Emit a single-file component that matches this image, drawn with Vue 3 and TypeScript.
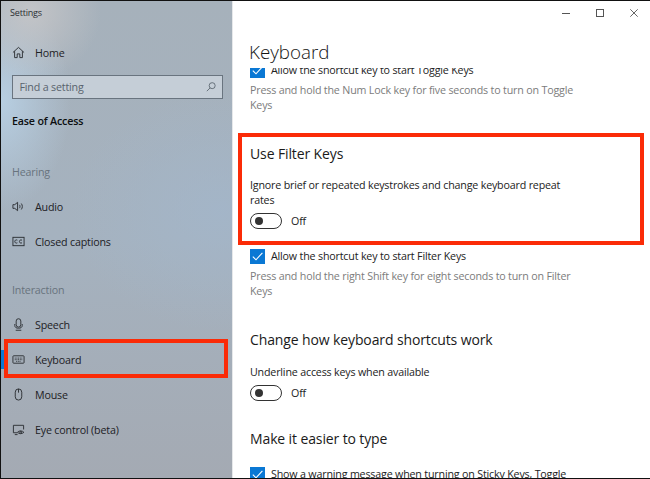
<script setup lang="ts">
interface NavItem { label: string; icon: string; active?: boolean }
const hearing: NavItem[] = [
  { label: 'Audio', icon: 'audio' },
  { label: 'Closed captions', icon: 'cc' },
]
const interaction: NavItem[] = [
  { label: 'Speech', icon: 'speech' },
  { label: 'Keyboard', icon: 'keyboard', active: true },
  { label: 'Mouse', icon: 'mouse' },
  { label: 'Eye control (beta)', icon: 'eye' },
]
const groups = [
  { title: 'Hearing', items: hearing },
  { title: 'Interaction', items: interaction },
]
</script>

<template>
  <div class="window">
    <aside class="sidebar">
      <div class="app-title">Settings</div>
      <div class="nav-row home">
        <svg class="icon" viewBox="0 0 14 14" fill="none" stroke="#2b2f33" stroke-width="1">
          <path d="M1 7 7 1.5 13 7M2.8 5.6V12.5H5.6V8.5H8.4V12.5H11.2V5.6" />
        </svg>
        <span>Home</span>
      </div>
      <div class="search">
        <span>Find a setting</span>
        <svg viewBox="0 0 12 12" width="10" height="10" fill="none" stroke="#55606a" stroke-width="1">
          <circle cx="7.4" cy="4.4" r="3.6" />
          <path d="M5 7 1 11" />
        </svg>
      </div>
      <div class="section-name">Ease of Access</div>
      <section v-for="g in groups" :key="g.title" class="group">
        <div class="group-title">{{ g.title }}</div>
        <div v-for="it in g.items" :key="it.label" class="nav-row" :class="{ active: it.active }">
          <svg class="icon" viewBox="0 0 14 14" fill="none" stroke="#2b2f33" stroke-width="1">
            <template v-if="it.icon === 'audio'">
              <path d="M1 5H3L6 2.5V11.5L3 9H1Z" />
              <path d="M8 5.2C8.8 6.2 8.8 7.8 8 8.8M10 3.8C11.5 5.6 11.5 8.4 10 10.2" />
            </template>
            <template v-else-if="it.icon === 'cc'">
              <rect x="1" y="2.5" width="12" height="9" />
              <path d="M5.8 5.6C4 4.6 3 6 3 7S4 9.4 5.8 8.4M10.8 5.6C9 4.6 8 6 8 7S9 9.4 10.8 8.4" />
            </template>
            <template v-else-if="it.icon === 'speech'">
              <rect x="4.5" y="0.8" width="5" height="9" rx="2.5" />
              <path d="M3 6.5V8C3 10.5 5 11 7 11S11 10.5 11 8V6.5M4 13.2H10" />
            </template>
            <template v-else-if="it.icon === 'keyboard'">
              <rect x="1" y="3" width="12" height="8" rx="0.8" />
              <path d="M3 5.5H11M3 7.2H11M4.5 9H9.5" stroke-dasharray="1 0.8" />
            </template>
            <template v-else-if="it.icon === 'mouse'">
              <rect x="3.5" y="1" width="7" height="12" rx="3.5" />
              <path d="M7 1V5" />
            </template>
            <template v-else>
              <path d="M6 10.5H1.5V2.5H12.5V7M3 12.5H6" />
              <path d="M6 10C7.5 8 11 8 12.8 10C11 12 7.5 12 6 10Z" />
              <circle cx="9.4" cy="10" r="1" />
            </template>
          </svg>
          <span>{{ it.label }}</span>
        </div>
      </section>
    </aside>

    <main class="main">
      <div class="controls">
        <svg viewBox="0 0 8 8" width="8" height="8" fill="none" stroke="#555" stroke-width="1"><path d="M0 4.5H8" /></svg>
        <svg viewBox="0 0 8 8" width="8" height="8" fill="none" stroke="#555" stroke-width="1"><rect x="0.5" y="0.5" width="7" height="7" /></svg>
        <svg viewBox="0 0 8 8" width="8" height="8" fill="none" stroke="#555" stroke-width="0.9"><path d="M0.3 0.3 7.7 7.7M7.7 0.3 0.3 7.7" /></svg>
      </div>
      <h1 class="page-title">Keyboard</h1>
      <div class="scroller">
        <div class="content">
          <label class="check"><span class="box"><svg viewBox="0 0 15 15" width="15" height="15" fill="none" stroke="#fff" stroke-width="1.1"><path d="M2.8 7.6 6 10.8 12.4 3.8" /></svg></span>Allow the shortcut key to start Toggle Keys</label>
          <p class="hint">Press and hold the Num Lock key for five seconds to turn on Toggle Keys</p>

          <h2 class="heading first">Use Filter Keys</h2>
          <p class="text">Ignore brief or repeated keystrokes and change keyboard repeat rates</p>
          <div class="toggle-row"><span class="toggle"></span><span>Off</span></div>
          <label class="check after-toggle"><span class="box"><svg viewBox="0 0 15 15" width="15" height="15" fill="none" stroke="#fff" stroke-width="1.1"><path d="M2.8 7.6 6 10.8 12.4 3.8" /></svg></span>Allow the shortcut key to start Filter Keys</label>
          <p class="hint">Press and hold the right Shift key for eight seconds to turn on Filter Keys</p>

          <h2 class="heading second">Change how keyboard shortcuts work</h2>
          <p class="text">Underline access keys when available</p>
          <div class="toggle-row"><span class="toggle"></span><span>Off</span></div>

          <h2 class="heading third">Make it easier to type</h2>
          <label class="check last"><span class="box"><svg viewBox="0 0 15 15" width="15" height="15" fill="none" stroke="#fff" stroke-width="1.1"><path d="M2.8 7.6 6 10.8 12.4 3.8" /></svg></span>Show a warning message when turning on Sticky Keys, Toggle</label>
        </div>
      </div>
    </main>

    <div class="mark mark-nav"></div>
    <div class="mark mark-main"></div>
  </div>
</template>

<style>
html, body { margin: 0; background: #fff; }
</style>

<style scoped>
.window {
  position: relative;
  box-sizing: border-box;
  width: 650px;
  height: 479px;
  border-top: 1px solid #111;
  border-left: 1px solid #111;
  border-bottom: 1px solid #111;
  display: flex;
  overflow: hidden;
  font-family: "Open Sans", "Noto Sans", sans-serif;
  font-size: 10.7px;
  letter-spacing: -0.18px;
  color: #1c1c1c;
  background: #fff;
}
.sidebar {
  width: 232px;
  flex: none;
  box-sizing: border-box;
  background:
    radial-gradient(circle at 30px 10px, rgba(198, 198, 200, .9), rgba(198, 198, 200, 0) 70px),
    radial-gradient(ellipse 70px 110px at 0 100px, rgba(184, 208, 228, .95), rgba(184, 208, 228, 0)),
    radial-gradient(ellipse 150px 120px at 220px 210px, rgba(163, 182, 202, .8), rgba(163, 182, 202, 0)),
    linear-gradient(180deg, #a6b1bb 0%, #a5b2bf 50%, #a4aab3 100%);
  border-right: 1px solid #e6e8ea;
}
.app-title { height: 22px; padding: 4px 0 0 9px; box-sizing: border-box; font-size: 9px; line-height: 15px; color: #2a2e32; }
.nav-row { height: 35px; display: flex; align-items: center; gap: 10px; padding-left: 11px; color: #1d2125; }
.home { margin-top: 12px; height: 35px; }
.icon { width: 13px; height: 13px; flex: none; }
.search {
  box-sizing: border-box;
  margin: 5px 0 0 10.5px;
  width: 211px;
  height: 24px;
  border: 1.5px solid #69747f;
  background: #c5ced7;
  display: flex;
  align-items: center;
  justify-content: space-between;
  padding: 0 5.5px 0 7px;
  color: #59636d;
}
.section-name { margin: 14px 0 0 11px; height: 16px; line-height: 16px; font-weight: 600; color: #0c0e10; }
.group-title { padding-left: 11px; height: 16px; line-height: 16px; margin-top: 35px; color: #68737d; }
.group + .group .group-title { margin-top: 23px; }
.group-title + .nav-row { margin-top: 9px; }
.active { position: relative; }
.active::before { content: ""; position: absolute; left: 0; top: 8px; width: 2.5px; height: 19px; background: #0a78d4; }
.main { flex: 1; min-width: 0; display: flex; flex-direction: column; }
.controls { height: 23px; flex: none; display: flex; justify-content: flex-end; align-items: center; gap: 26px; padding-right: 12px; box-sizing: border-box; }
.page-title { margin: 15px 0 2px 16px; height: 27px; line-height: 27px; font-size: 18.8px; font-weight: 300; letter-spacing: 0; color: #141414; }
.scroller { flex: 1; min-height: 0; overflow: hidden; }
.content { padding-left: 17px; width: 330px; }
.check { display: flex; align-items: center; gap: 6px; height: 16px; line-height: 16px; white-space: nowrap; color: #222; }
.check.last { margin-top: 17px; }
.check.after-toggle { margin-top: 19px; }
.content > .check:first-child { margin-top: -6px; }
.box { width: 15px; height: 15px; background: #0a78d4; flex: none; display: block; }
.box svg { display: block; }
.hint { margin: 5px 0 0; line-height: 15px; color: #7c7c7c; }
.text { margin: 0; line-height: 15px; color: #222; }
.heading { margin: 0; font-size: 14px; font-weight: 400; line-height: 20px; letter-spacing: -0.12px; color: #1a1a1a; white-space: nowrap; }
.first { margin-top: 31px; margin-bottom: 14px; }
.second { margin-top: 31px; margin-bottom: 15px; }
.third { margin-top: 28px; }
.toggle-row { display: flex; align-items: center; gap: 9px; margin-top: 5px; height: 16px; color: #222; }
.toggle { position: relative; box-sizing: border-box; width: 32px; height: 16px; border: 1.5px solid #333; border-radius: 8px; display: block; }
.toggle::after { content: ""; position: absolute; left: 3.5px; top: 2.5px; width: 8px; height: 8px; border-radius: 50%; background: #333; }
.mark { position: absolute; box-sizing: border-box; border: 4px solid #fb2b07; pointer-events: none; }
.mark-nav { left: 3px; top: 338px; width: 224px; height: 39px; }
.mark-main { left: 237px; top: 132px; width: 406px; height: 112px; }
</style>
